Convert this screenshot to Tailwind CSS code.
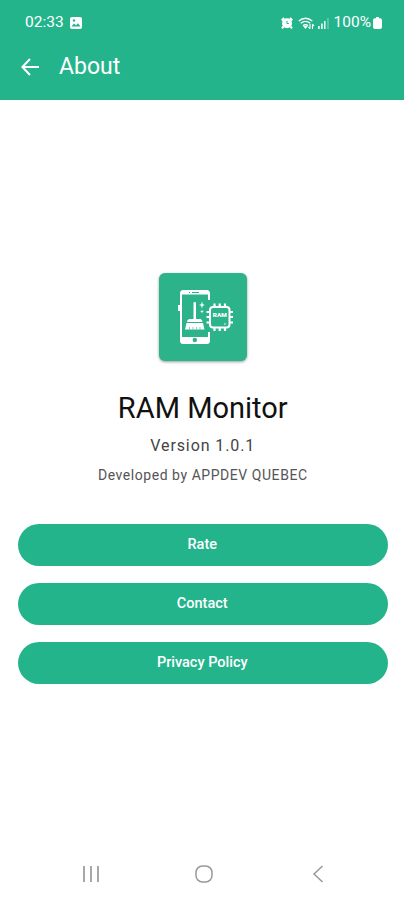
<!DOCTYPE html>
<html lang="en">
	<head>
		<meta charset="UTF-8" />
		<meta name="viewport" content="width=device-width, initial-scale=1.0" />
		<script src="https://cdn.jsdelivr.net/npm/@tailwindcss/browser@4"></script>
		<title>About - RAM Monitor</title>
	</head>
	<body class="flex h-screen flex-col overflow-hidden bg-white font-[Roboto,sans-serif]">
		<header class="h-[100px] shrink-0 bg-[#24b48c] text-white">
			<!-- Status bar -->
			<div class="flex h-[46px] items-center justify-between pr-[22px] pl-[25px]">
				<div class="flex items-center gap-[6px]">
					<span class="text-[15.5px] leading-none">02:33</span>
					<svg class="size-[12px]" viewBox="0 0 12 12">
						<rect width="12" height="12" rx="2" fill="#fff" />
						<path d="M1.5 9.5 4 6.5 6 8.3 8 6.3 10.5 9.5Z" fill="#24b48c" />
						<circle cx="4" cy="3.5" r="1.2" fill="#24b48c" />
					</svg>
				</div>
				<div class="flex items-center">
					<svg class="mr-[5px] h-[12px] w-[12px]" viewBox="0 0 12 12">
						<circle cx="6" cy="6.2" r="5" fill="#fff" />
						<path d="M.8 3.5 3 .8M11.200 3.5 9 .8M2.5 9.500 1 11.3M9.5 9.500 11 11.3" stroke="#fff" stroke-width="2" />
						<path d="M6 3.8V6.5H7.8" stroke="#24b48c" fill="none" />
					</svg>
					<svg class="mr-[3px] h-[13px] w-[17px]" viewBox="0 0 17 13" fill="none" stroke="#fff" stroke-width="1.3">
						<path d="M.7 4Q7.500 -1.500 14.3 4M2.700 6.300Q7.500 2.5 12.3 6.300M5 8.600Q7.500 6.8 10 8.600" />
						<path d="M6.300 9.500H8.700L7.500 11Z" fill="#fff" />
						<path d="M12 7V11.500M10.500 10 12 11.800M14.500 12V7.500M16 9 14.500 7.200" stroke-width="1.100" />
					</svg>
					<svg class="mr-[5px] h-[11px] w-[11px]" viewBox="0 0 11 11" fill="#fff">
						<path d="M0 8H1.800V11H0ZM3 5.500H4.800V11H3ZM6 3H7.6V11H6Z" opacity=".85" />
						<path d="M9.4 0H10.6V11H9.4Z" opacity=".4" />
					</svg>
					<span class="text-[15.5px] leading-none">100%</span>
					<svg class="ml-[2px] h-[12px] w-[9px]" viewBox="0 0 9 12" fill="#fff">
						<path d="M3 0H6V1.3H7Q9 1.3 9 3.3V10Q9 12 7 12H2Q0 12 0 10V3.3Q0 1.3 2 1.3H3Z" />
					</svg>
				</div>
			</div>
			<!-- Toolbar -->
			<div class="flex h-[41px] items-center pl-[21px]">
				<svg class="mr-[20px] size-[18px]" viewBox="0 0 18 18" fill="none" stroke="#fff" stroke-width="2">
					<path d="M18 9H1.5M9 1 1.4 9 9 17" />
				</svg>
				<h1 class="text-[23px] leading-none">About</h1>
			</div>
		</header>

		<main class="flex grow flex-col items-center pt-[173px] pr-[16px] pl-[17.5px]">
			<svg class="size-[88px] rounded-[6px] bg-[#2cb389] shadow-[0_1px_3px_rgba(0,0,0,0.4)]" viewBox="0 0 88 88">
				<!-- Phone -->
				<path d="M50 27V20.5Q50 18 47.5 18H24.500Q22 18 22 20.500V67.500Q22 70 24.500 70H47.500Q50 70 50 67.500V59" fill="none" stroke="#fff" stroke-width="2" />
				<path d="M21.500 20Q21.500 17.500 24 17.500H48Q50.500 17.500 50.500 20V21.500H21.500ZM21.500 64H50.500V68Q50.500 70.500 48 70.500H24Q21.500 70.500 21.500 68Z" fill="#fff" />
				<path d="M20 32V38" stroke="#fff" stroke-width="2" />
				<path d="M30 19.500H31M33 19.500H40" stroke="#2cb389" />
				<circle cx="35.800" cy="67" r="2.200" fill="#2cb389" />
				<!-- Broom -->
				<path d="M34.500 29.500Q35.800 28.500 37 29.500V46H41.500Q43.500 47 43.500 49H28Q28 47 30 46H34.500ZM27.500 50H44L45.500 56.500H26Z" fill="#fff" />
				<path d="M30.500 56.500V54M34 56.500V54M37.500 56.500V54M41 56.500V54" stroke="#2cb389" stroke-width=".600" />
				<path d="M43 28.500 43.800 31.200 46 32 43.800 32.800 43 35.500 42.200 32.800 40 32 42.200 31.200ZM43 36.500 43.500 38 45 38.500 43.500 39 43 40.500 42.500 39 41 38.500 42.500 38Z" fill="#fff" />
				<!-- Chip -->
				<rect x="51" y="34" width="19.500" height="20.500" rx="3" fill="none" stroke="#fff" stroke-width="2" />
				<path d="M55.500 30.500V34M60.700 30.500V34M66 30.500V34M55.500 54.500V58M60.700 54.500V58M66 54.500V58M47.500 39H51M47.500 44H51M47.500 49.500H51M70.500 39H74M70.500 44H74M70.500 49.500H74" stroke="#fff" stroke-width="2.200" />
				<text x="60.800" y="44" font-size="5.200" font-weight="900" textLength="14" lengthAdjust="spacingAndGlyphs" text-anchor="middle" fill="#fff">RAM</text>
				<circle cx="66" cy="51" r=".8" fill="#fff" />
			</svg>

			<h2 class="mt-[30px] text-[29px] leading-[34px] text-[#111]">RAM Monitor</h2>
			<p class="mt-[11px] text-[16px] leading-[20px] tracking-[0.9px] text-[#444]">Version 1.0.1</p>
			<p class="mt-[10px] text-[14px] leading-[18px] tracking-[0.55px] text-[#555]">Developed by APPDEV QUEBEC</p>

			<div class="mt-[39.5px] flex w-full flex-col gap-[17px]">
				<button class="h-[42px] rounded-full bg-[#24b48c] pr-px text-[14.5px] font-medium text-white">Rate</button>
				<button class="h-[42px] rounded-full bg-[#24b48c] pr-px text-[14.5px] font-medium text-white">Contact</button>
				<button class="h-[42px] rounded-full bg-[#24b48c] pr-px text-[14.5px] font-medium text-white">Privacy Policy</button>
			</div>
		</main>

		<!-- Navigation bar -->
		<nav class="grid h-[52px] shrink-0 grid-cols-[1fr_auto_1fr] items-center pr-[80px] pl-[82px]">
			<svg class="h-[18px] w-[18px]" viewBox="0 0 18 18" stroke="#999" stroke-width="1.700"><path d="M2 1V17M9 1V17M16 1V17" /></svg>
			<svg class="mr-[-2px] h-[18px] w-[18px]" viewBox="0 0 18 18" fill="none" stroke="#999" stroke-width="1.500"><rect x="1" y="1" width="16" height="16" rx="6.500" /></svg>
			<svg class="h-[18px] w-[12px] justify-self-end" viewBox="0 0 12 18" fill="none" stroke="#999" stroke-width="1.500"><path d="M10.500 1 2 9 10.500 17" /></svg>
		</nav>
	</body>
</html>
